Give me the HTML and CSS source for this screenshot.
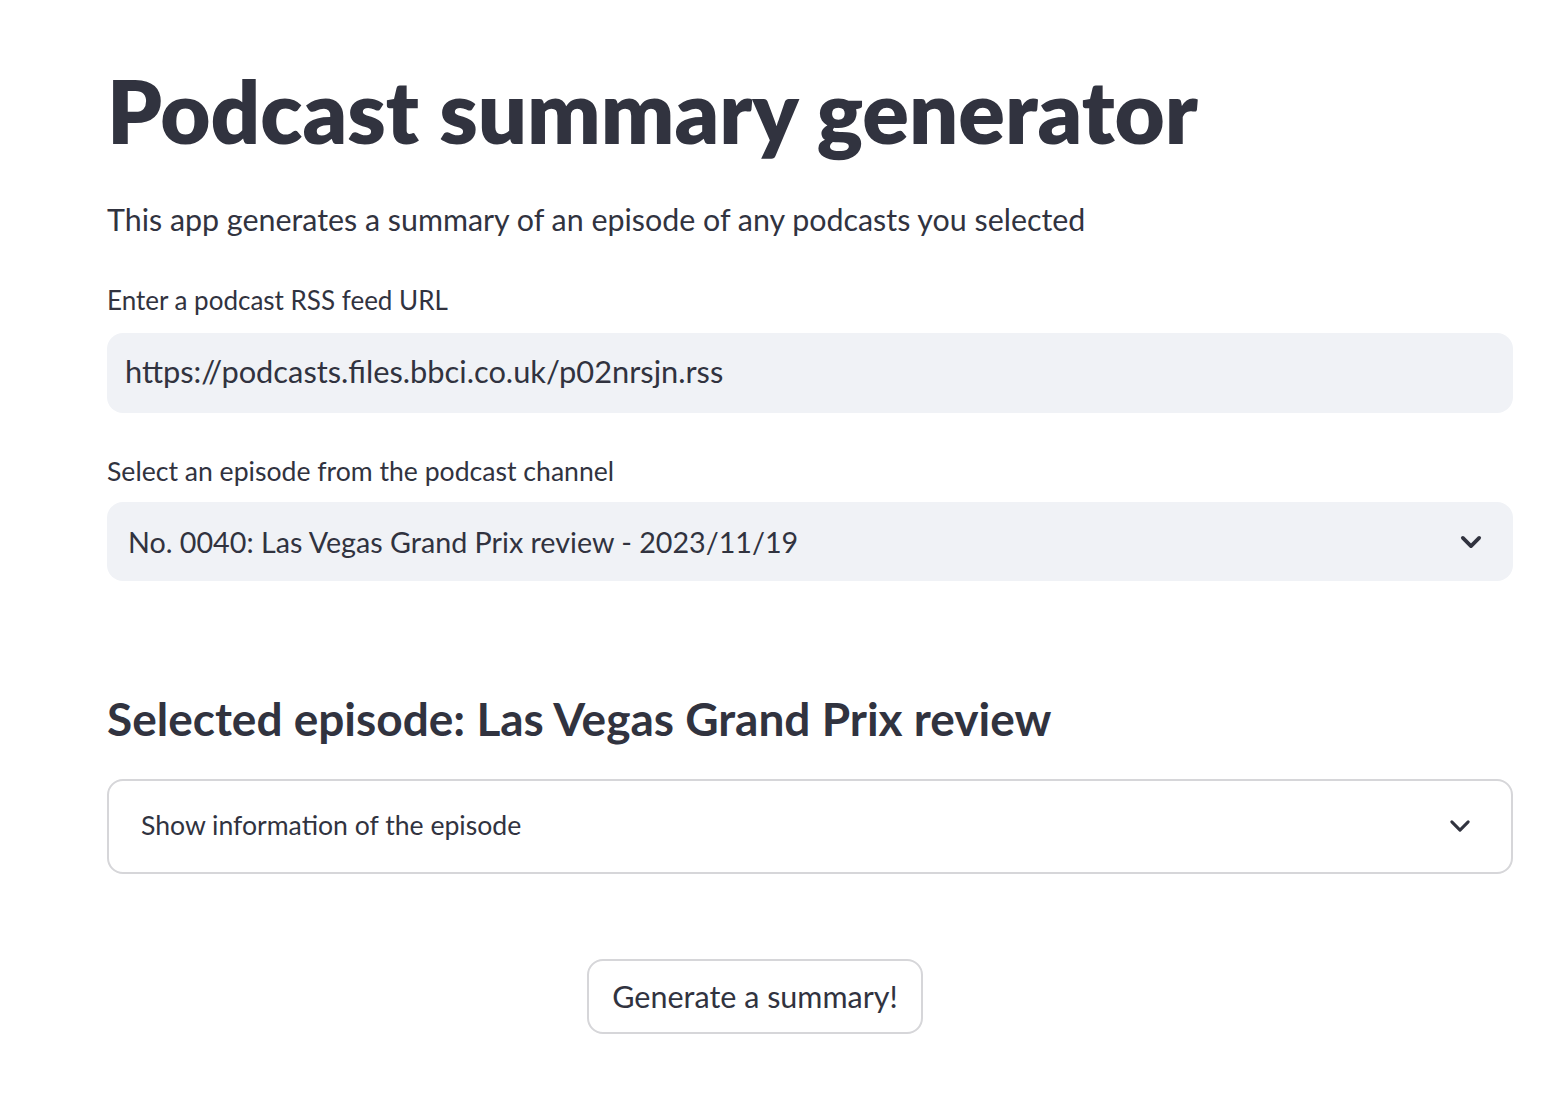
FILE: index.html
```html
<!DOCTYPE html>
<html lang="en">
<head>
<meta charset="utf-8">
<title>Podcast summary generator</title>
<link rel="stylesheet" href="styles.css">
</head>
<body>
<main class="page">
  <h1 class="title">Podcast summary generator</h1>
  <p class="intro">This app generates a summary of an episode of any podcasts you selected</p>

  <div class="field field-url">
    <label class="label label-url" for="rss">Enter a podcast RSS feed URL</label>
    <div class="input-box">
      <input id="rss" class="text-input" type="text" value="https://podcasts.files.bbci.co.uk/p02nrsjn.rss">
    </div>
  </div>

  <div class="field field-select">
    <div class="label label-select">Select an episode from the podcast channel</div>
    <div class="select-box">
      <span class="select-value">No. 0040: Las Vegas Grand Prix review - 2023/11/19</span>
      <svg class="chevron chevron-select" viewBox="0 0 24 24" width="28" height="28" aria-hidden="true">
        <path d="M5 8.5 L12 15.5 L19 8.5" fill="none" stroke="#31333F" stroke-width="3.2" stroke-linecap="round" stroke-linejoin="round"/>
      </svg>
    </div>
  </div>

  <h3 class="subheader">Selected episode: Las Vegas Grand Prix review</h3>

  <div class="expander">
    <span class="expander-label">Show information of the episode</span>
    <svg class="chevron" viewBox="0 0 24 24" width="28" height="28" aria-hidden="true">
      <path d="M5 8.5 L12 15.5 L19 8.5" fill="none" stroke="#31333F" stroke-width="2.6" stroke-linecap="round" stroke-linejoin="round"/>
    </svg>
  </div>

  <div class="button-row">
    <button class="btn" type="button">Generate a summary!</button>
  </div>
</main>
</body>
</html>
```

FILE: styles.css
```css
* { box-sizing: border-box; }

html, body {
  margin: 0;
  padding: 0;
  background: #ffffff;
}

body {
  font-family: "Lato", "Noto Sans", sans-serif;
  color: #31333F;
}

.page {
  width: 1406px;
  margin-left: 107px;
  padding-top: 59px;
  display: flex;
  flex-direction: column;
}

.title {
  margin: 0;
  font-size: 86.6px;
  font-weight: 800;
  line-height: 1.2;
}

.intro {
  margin: 38px 0 0 0;
  font-size: 30.4px;
  line-height: 1.2;
}

.field {
  display: flex;
  flex-direction: column;
  gap: 16px;
}

.field-url { margin-top: 48px; }
.field-select { margin-top: 43px; gap: 15px; }

.label {
  font-size: 26px;
  line-height: 1.2;
}

.label-select { font-size: 26.6px; }

.input-box {
  height: 80px;
  background: #F0F2F6;
  border-radius: 16px;
  display: flex;
  align-items: center;
  padding-left: 18px;
}

.text-input {
  border: 0;
  outline: 0;
  background: transparent;
  font-family: inherit;
  font-size: 30.8px;
  line-height: 1.2;
  color: #31333F;
  width: 100%;
  padding: 0;
}

.select-box {
  height: 79px;
  background: #F0F2F6;
  border-radius: 16px;
  display: flex;
  align-items: center;
  justify-content: space-between;
  padding: 0 28px 0 21px;
}

.select-value {
  font-size: 28.7px;
  line-height: 1.2;
}

.chevron { display: block; }

.subheader {
  margin: 110px 0 0 0;
  font-size: 46px;
  font-weight: 700;
  line-height: 1.2;
}

.expander {
  margin-top: 32px;
  height: 95px;
  border: 2px solid #D6D6D9;
  border-radius: 16px;
  display: flex;
  align-items: center;
  justify-content: space-between;
  padding: 0 37px 0 32px;
}

.expander-label {
  font-size: 26.6px;
  line-height: 1.2;
}

.button-row {
  margin-top: 85px;
  padding-left: 480px;
  display: flex;
}

.btn {
  width: 336px;
  height: 75px;
  background: #ffffff;
  border: 2px solid #D6D6D9;
  border-radius: 16px;
  font-family: inherit;
  font-size: 30.5px;
  color: #31333F;
  padding: 0;
}
```
